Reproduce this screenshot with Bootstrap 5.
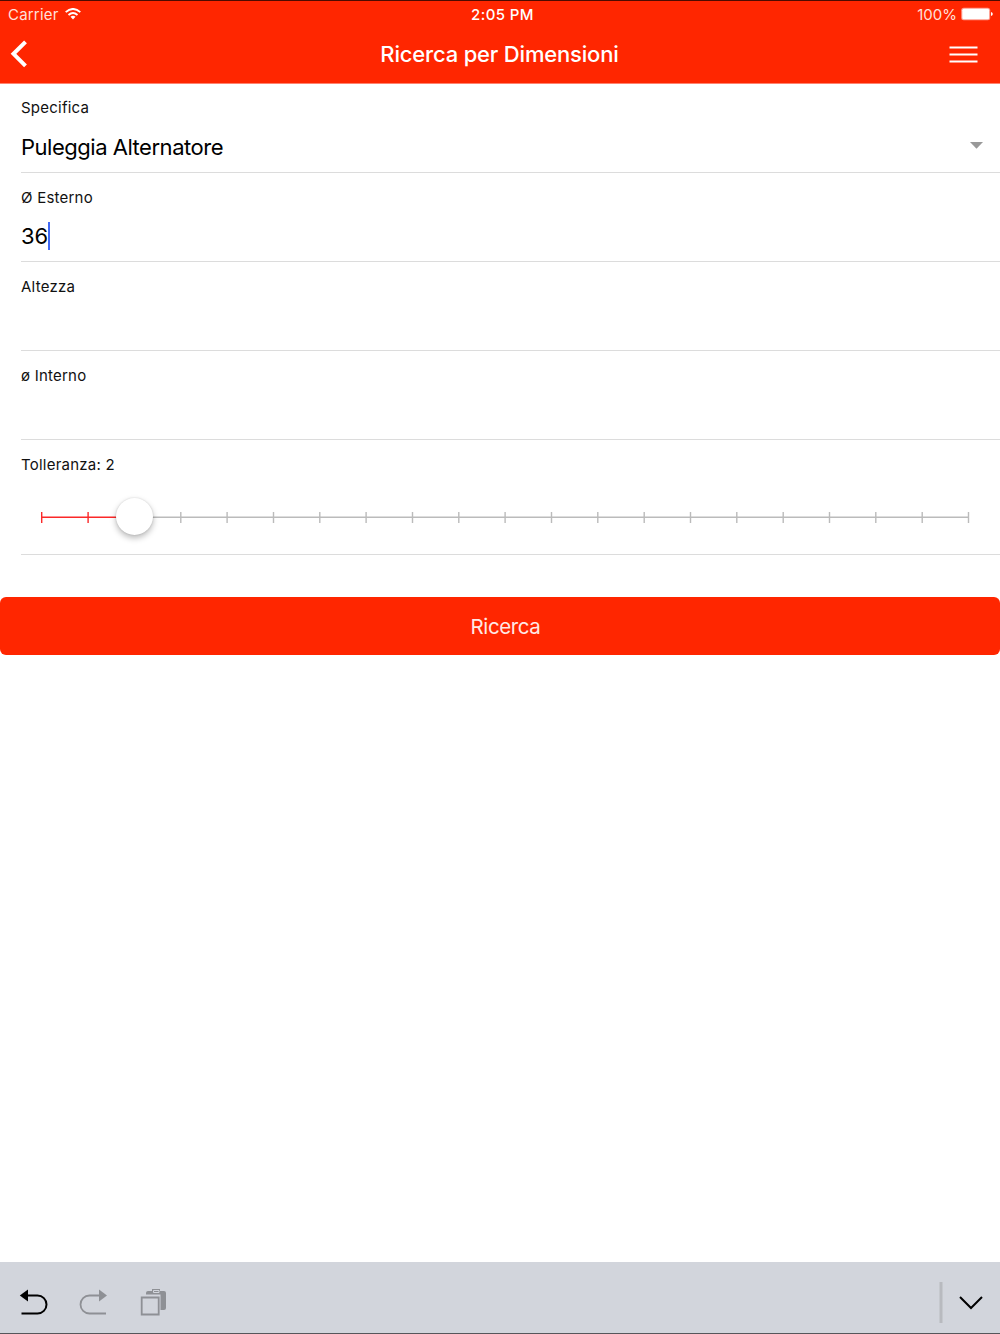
<!DOCTYPE html>
<html lang="it">
<head>
<meta charset="utf-8">
<meta name="viewport" content="width=device-width, initial-scale=1">
<title>Ricerca per Dimensioni</title>
<link href="https://cdn.jsdelivr.net/npm/bootstrap@5.3.0/dist/css/bootstrap.min.css" rel="stylesheet">
<style>
body{font-family:Inter,"Liberation Sans",sans-serif;color:#000;line-height:1;overflow:hidden}
svg{display:block;flex:none}
.app-top{background:#ff2600;color:#fff;height:84px;border-top:1px solid #4d0b00;border-bottom:1px solid #ff8370}
.status-bar{height:26px;font-size:15px;padding:0 7px 0 8px}
.status-bar .side{flex:1 1 0;color:#ffe0db}
.carrier{letter-spacing:.2px}
.wifi{margin-left:6px}
.status-time{font-weight:500;letter-spacing:.4px;margin-left:4px}
.title-bar{height:54px;padding:0 22px 0 10px}
.title-bar .end{flex:1 1 0}
.title-bar h1{font-size:22px;font-weight:500;letter-spacing:-.18px;margin:1px 0 0 11px}
.field{margin-left:21px;height:89px;border-bottom:1px solid #dcdcdc;padding-top:16px}
.field + .field{padding-top:17px}
.field + .field .value{margin-top:15px}
.field.slider{height:115px}
.field label{font-size:15px;line-height:16px;letter-spacing:.23px;color:#111}
.field .value{font-size:22px;line-height:30px;height:30px;margin-top:16px}
.choice{letter-spacing:-.48px}
.choice-arrow{margin:0 17px 4px 0}
.caret{width:2px;height:28px;background:#4169f5;margin-left:-.4px}
.track{height:48px;margin-top:19px;position:relative;margin-left:-21px}
.knob{position:absolute;left:116px;top:6px;width:37px;height:37px;border-radius:50%;background:#fff;box-shadow:0 3px 6px rgba(0,0,0,.28),0 0 2px rgba(0,0,0,.14)}
.btn-search,.btn-search:hover{background:#ff2600;color:#ffe9e6;height:58px;margin-top:42px;border:0;border-radius:6px;font-size:20.5px;letter-spacing:-.4px;padding:2px 0 0 11px}
.key-bar{height:72px;background:#d2d5dc;border-bottom:1px solid #55565a;padding-top:10px}
</style>
<script src="https://cdn.jsdelivr.net/npm/bootstrap@5.3.0/dist/js/bootstrap.bundle.min.js"></script>
</head>
<body class="bg-white d-flex flex-column vh-100">
<header class="app-top flex-shrink-0">
  <div class="status-bar d-flex align-items-center">
    <div class="side d-flex align-items-center"><span class="carrier">Carrier</span>
      <svg class="wifi" width="16" height="12" viewBox="0 0 16 12" fill="none" stroke="#fff" stroke-width="1.9"><path d="M.7 4.1Q8-2.2 15.3 4.1M3.5 7Q8 3.2 12.5 7"/><path d="M5.5 8.8Q8 6.8 10.5 8.8L8 11.4z" fill="#fff" stroke="none"/></svg>
    </div>
    <span class="status-time">2:05 PM</span>
    <div class="side d-flex align-items-center justify-content-end"><span>100%</span>
      <svg class="ms-1" width="32" height="14" viewBox="0 0 32 14"><rect x=".2" y=".8" width="29" height="12.4" rx="2.5" fill="#ff9a8c"/><rect x="1.3" y="1.8" width="26.8" height="10.4" rx="1.5" fill="#fff"/><path d="M30 5q1.8 .3 1.8 2t-1.8 2z" fill="#fff"/></svg>
    </div>
  </div>
  <nav class="title-bar d-flex align-items-center">
    <div class="end"><svg width="18" height="28" viewBox="0 0 18 28" fill="none" stroke="#fff" stroke-width="4"><path d="M15.5 1.8 3.5 13.8l12 12"/></svg></div>
    <h1>Ricerca per Dimensioni</h1>
    <div class="end d-flex justify-content-end"><svg width="29" height="18" viewBox="0 0 29 18" stroke="#fff" stroke-width="2"><path d="M.5 2.5h28M.5 9.5h28M.5 16.5h28"/></svg></div>
  </nav>
</header>
<main class="flex-grow-1">
  <div class="field">
    <label class="d-block">Specifica</label>
    <div class="value d-flex align-items-center justify-content-between"><span class="choice">Puleggia Alternatore</span>
      <svg class="choice-arrow" width="13" height="7" viewBox="0 0 13 7"><path d="M0 0h13L6.5 6.8z" fill="#999"/></svg></div>
  </div>
  <div class="field">
    <label class="d-block">Ø Esterno</label>
    <div class="value d-flex align-items-center"><span>36</span><span class="caret"></span></div>
  </div>
  <div class="field"><label class="d-block">Altezza</label></div>
  <div class="field"><label class="d-block">ø Interno</label></div>
  <div class="field slider">
    <label class="d-block">Tolleranza: 2</label>
    <div class="track">
      <svg width="1000" height="48" viewBox="0 0 1000 48" fill="none" stroke-width="1.4">
        <path stroke="#bbb" d="M134 25.2H969M180.8 20v11M227.1 20v11M273.5 20v11M319.8 20v11M366.1 20v11M412.5 20v11M458.8 20v11M505.1 20v11M551.5 20v11M597.8 20v11M644.2 20v11M690.5 20v11M736.8 20v11M783.2 20v11M829.5 20v11M875.8 20v11M922.2 20v11M968.5 20v11"/>
        <path stroke="#fb2929" d="M41.5 25.2H134M41.7 20v11M88.1 20v11"/>
      </svg>
      <span class="knob"></span>
    </div>
  </div>
  <button type="button" class="btn btn-search w-100">Ricerca</button>
</main>
<footer class="key-bar d-flex align-items-center justify-content-between flex-shrink-0">
  <svg width="180" height="40" viewBox="0 0 180 40" fill="none" stroke-width="2">
    <path stroke="#000" d="M26 12.5h11.5a9 9 0 0 1 0 18H21.5"/><path fill="#000" d="M19.8 12.5 28 6.5v12z"/>
    <path stroke="#8e9095" stroke-width="1.8" d="M100 12.5H89.5a9 9 0 0 0 0 18H106"/><path fill="#8e9095" d="M107 12.5 99 6.5v12z"/>
    <path fill="#8e9095" d="M146 11.5V10q0-2 2-2h4V6h8v2h4q2 0 2 2v15q0 2-2 2h-3.5V11.5z"/><path stroke="#d2d5dc" stroke-width="1" d="M153.5 7.5h5.5v2h-5.5z"/>
    <path stroke="#8e9095" stroke-width="1.8" d="M141.7 14.5h17v17h-17z"/>
  </svg>
  <svg width="62" height="44" viewBox="0 0 62 44" fill="none"><path stroke="#b8babf" stroke-width="3" d="M3 1v41"/><path stroke="#000" stroke-width="2" d="m22 16 11 11 11-11"/></svg>
</footer>
</body>
</html>
